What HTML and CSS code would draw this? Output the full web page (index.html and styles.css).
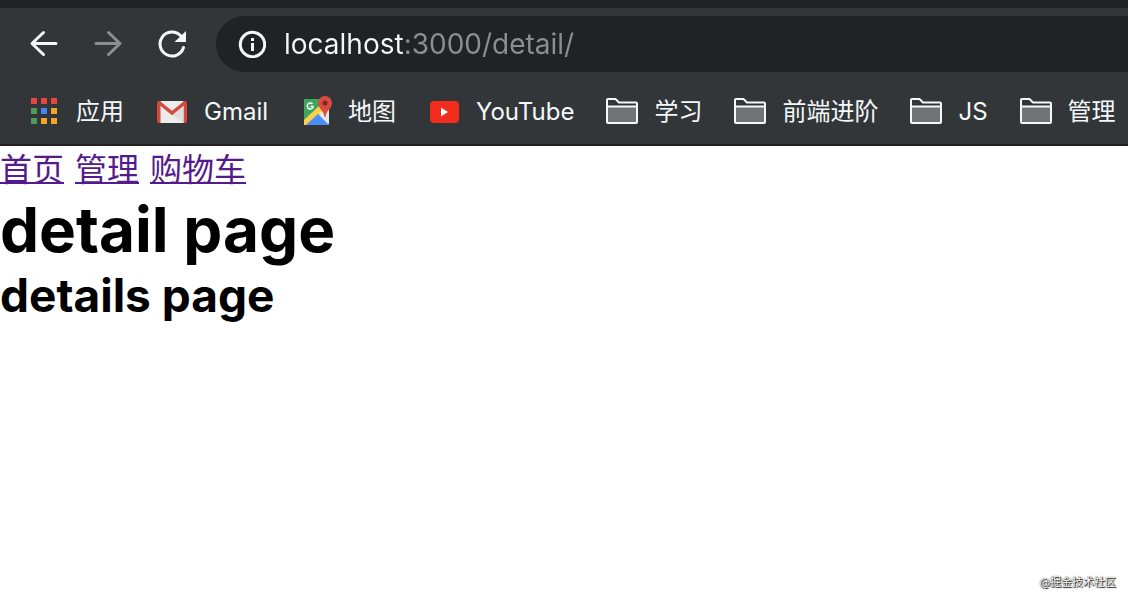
FILE: index.html
```html
<!DOCTYPE html>
<html lang="zh-CN">
<head>
    <meta charset="UTF-8" />
    <meta name="viewport" content="width=device-width, initial-scale=1" />
    <title>detail page</title>
    <link rel="stylesheet" href="styles.css">
</head>
<body>
    <header class="browser">
        <div class="toolbar">
            <button class="tool" type="button" aria-label="后退">
                <svg viewBox="0 0 32 32"><path d="M28 15.500H4.500M15.500 4.500L4 15.500l11.500 11" /></svg>
            </button>
            <button class="tool" type="button" aria-label="前进" disabled>
                <svg viewBox="0 0 32 32"><path d="M4 15.500h23.500M16.500 4.500L28 15.500l-11.500 11" /></svg>
            </button>
            <button class="tool" type="button" aria-label="重新加载">
                <svg viewBox="0 0 32 32"><path d="M24.500 7.500A12 12 0 1 0 27.500 19.500" /><path class="solid" d="M30 3v11H18.500z" /></svg>
            </button>
            <label class="address">
                <svg class="info" viewBox="0 0 28 28" aria-hidden="true">
                    <circle cx="14.500" cy="14.500" r="12.200" />
                    <path d="M14.500 13v8M14.500 8v3" />
                </svg>
                <input class="url" type="text" value="localhost:3000/detail/" aria-label="地址" spellcheck="false">
            </label>
        </div>
        <nav class="bookmarks">
            <a class="bookmark" href="#">
                <svg viewBox="0 0 32 32" aria-hidden="true">
                    <path fill="#e8453c" d="M3 2h6v6H3zM13 2h6v6h-6zM23 2h6v6h-6z" />
                    <path fill="#4e9a5b" d="M3 12h6v6H3zM3 22h6v6H3z" />
                    <path fill="#4285f4" d="M13 12h6v6h-6z" />
                    <path fill="#f4a62a" d="M23 12h6v6h-6zM13 22h6v6h-6zM23 22h6v6h-6z" />
                </svg>
                <span>应用</span>
            </a>
            <a class="bookmark" href="#">
                <svg viewBox="0 0 32 32" aria-hidden="true">
                    <rect x="1" y="5" width="30" height="22" rx="2" fill="#d5483d" />
                    <path fill="#ececea" d="M4.500 5h23v22h-23z" />
                    <path fill="#dededc" d="M16 18l11.500-9v18z" />
                    <path fill="none" stroke="#d5483d" stroke-width="3.500" d="M3 6.500l13 10.500L29 6.500" />
                </svg>
                <span>Gmail</span>
            </a>
            <a class="bookmark" href="#">
                <svg viewBox="0 0 32 32" aria-hidden="true">
                    <rect x="4" y="3" width="25" height="26" rx="2" fill="#e4e5e7" />
                    <path fill="#3fa45b" d="M6 3h18v6L4 28V5q0-2 2-2z" />
                    <path fill="#fbd04b" d="M4 24L20 9l5 6L10 29H4z" />
                    <path fill="#4b8df8" d="M6 29l12-11 11 11z" />
                    <path fill="#e4e5e7" d="M19 17l4-2 6 3v10z" />
                    <path fill="none" stroke="#fff" stroke-width="1.500" d="M12.500 8a3 3 0 1 0 .7 2.500H10.500" />
                    <path fill="#dc4b3e" d="M25 0a7 7 0 0 0-7 7c0 6 6 7 6.500 14h1C26 14 32 13 32 7a7 7 0 0 0-7-7z" />
                    <circle cx="25" cy="7" r="2.500" fill="#7b2a24" />
                </svg>
                <span>地图</span>
            </a>
            <a class="bookmark" href="#">
                <svg viewBox="0 0 32 32" aria-hidden="true">
                    <rect x="2" y="5" width="29" height="22" rx="4" fill="#f22b1d" />
                    <path fill="#fff" d="M13 11.500v9l7-4.500z" />
                </svg>
                <span>YouTube</span>
            </a>
            <a class="bookmark" href="#">
                <svg class="folder" viewBox="0 0 32 32" aria-hidden="true"><path d="M1 10.500h30V26q0 1-1 1H2q-1 0-1-1z" /><path class="tab" d="M1 11V4q0-1 1-1h7.500L13 6.500h17q1 0 1 1V11" /></svg>
                <span>学习</span>
            </a>
            <a class="bookmark" href="#">
                <svg class="folder" viewBox="0 0 32 32" aria-hidden="true"><path d="M1 10.500h30V26q0 1-1 1H2q-1 0-1-1z" /><path class="tab" d="M1 11V4q0-1 1-1h7.500L13 6.500h17q1 0 1 1V11" /></svg>
                <span>前端进阶</span>
            </a>
            <a class="bookmark" href="#">
                <svg class="folder" viewBox="0 0 32 32" aria-hidden="true"><path d="M1 10.500h30V26q0 1-1 1H2q-1 0-1-1z" /><path class="tab" d="M1 11V4q0-1 1-1h7.500L13 6.500h17q1 0 1 1V11" /></svg>
                <span>JS</span>
            </a>
            <a class="bookmark" href="#">
                <svg class="folder" viewBox="0 0 32 32" aria-hidden="true"><path d="M1 10.500h30V26q0 1-1 1H2q-1 0-1-1z" /><path class="tab" d="M1 11V4q0-1 1-1h7.500L13 6.500h17q1 0 1 1V11" /></svg>
                <span>管理</span>
            </a>
        </nav>
    </header>
    <main class="page">
        <nav class="links">
            <a href="#">首页</a>
            <a href="#">管理</a>
            <a href="#">购物车</a>
        </nav>
        <h1>detail page</h1>
        <h2>details page</h2>
    </main>
    <footer class="watermark">@掘金技术社区</footer>
</body>
</html>
```
FILE: styles.css
```css
:root {
    --bar: #323639;
    --dark: #1f2326;
    --text: #f4f8fa;
    --muted: #8b8f92;
}

* {
    box-sizing: border-box;
}

body {
    min-height: 100vh;
    margin: 0;
    display: flex;
    flex-direction: column;
    background: #fff;
    color: #000;
    font-family: Inter, "Noto Sans CJK SC", sans-serif;
}

/* Browser chrome */
.browser {
    background: var(--bar);
    border-top: 8px solid var(--dark);
    border-bottom: 2px solid #24201f;
}

.toolbar {
    display: flex;
    align-items: center;
    gap: 32px;
    padding: 8px 0 8px 28px;
}

.tool {
    width: 32px;
    height: 32px;
    padding: 0;
    border: 0;
    background: none;
    color: var(--text);
}

.tool:disabled {
    color: var(--muted);
}

.tool svg {
    display: block;
    fill: none;
    stroke: currentColor;
    stroke-width: 3;
    stroke-linecap: round;
    stroke-linejoin: round;
}

.tool .solid {
    fill: currentColor;
    stroke: none;
}

.address {
    flex: 1;
    display: flex;
    align-items: center;
    gap: 18px;
    height: 56px;
    margin-left: -4px;
    padding-left: 22px;
    border-radius: 28px 0 0 28px;
    background: var(--dark);
}

.info {
    width: 28px;
    height: 28px;
    fill: none;
    stroke: var(--text);
    stroke-width: 3;
}

/* host is bright, the rest of the url is dimmed */
.url {
    flex: 1;
    min-width: 0;
    padding: 0;
    border: 0;
    outline: 0;
    background: linear-gradient(to right, var(--text) 121px, var(--muted) 121px);
    -webkit-background-clip: text;
    background-clip: text;
    color: transparent;
    caret-color: var(--text);
    font: 28px/42px Inter, sans-serif;
}

.bookmarks {
    display: flex;
    gap: 32px;
    padding: 12px 0 12px 28px;
    overflow: hidden;
}

.bookmark {
    flex: none;
    display: flex;
    align-items: center;
    gap: 16px;
    color: var(--text);
    font-size: 24px;
    line-height: 40px;
    text-decoration: none;
}

.bookmark svg {
    width: 32px;
    height: 32px;
}

.folder path {
    fill: #707476;
    stroke: var(--text);
    stroke-width: 2;
}

.folder .tab {
    fill: none;
}

/* Page content */
.page {
    flex: 1;
}

.links {
    display: flex;
    gap: 11px;
    font-size: 32px;
    line-height: 48px;
}

.links a {
    color: #551a8b;
    text-decoration-thickness: 2px;
}

h1,
h2 {
    margin: 0;
    font-weight: 700;
}

h1 {
    font-size: 62px;
    line-height: 72px;
}

h2 {
    font-size: 46px;
    line-height: 58px;
}

.watermark {
    padding: 8px 12px 10px;
    color: #fff;
    font-size: 11px;
    line-height: 16px;
    text-align: right;
    text-shadow: 1px 1px 1px #000, 0 0 1px #000;
}
```
